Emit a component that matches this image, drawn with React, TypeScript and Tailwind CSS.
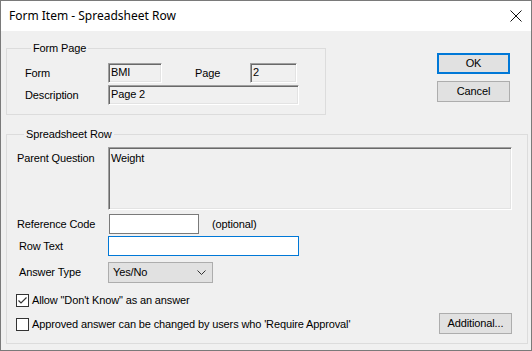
import React from 'react';

const sunken =
  'border border-t-[#a0a0a0] border-l-[#a0a0a0] border-b-white border-r-white shadow-[inset_1px_1px_0_#696969,inset_-1px_-1px_0_#e3e3e3]';

function Button({ children, focused }: { children: React.ReactNode; focused?: boolean }) {
  return (
    <button
      className={`w-[73px] h-[21px] bg-[#e1e1e1] text-[11px] text-black flex items-center justify-center ${
        focused ? 'border-2 border-[#0078d7]' : 'border border-[#adadad]'
      }`}
    >
      {children}
    </button>
  );
}

function Checkbox({ checked }: { checked?: boolean }) {
  return (
    <span className="w-[13px] h-[13px] border border-[#333333] bg-white flex items-center justify-center shrink-0">
      {checked && (
        <svg width="11" height="11" viewBox="0 0 11 11">
          <path d="M1.5 5.5 L4 8 L9.5 2.5" fill="none" stroke="#333333" strokeWidth="1.2" />
        </svg>
      )}
    </span>
  );
}

export default function App() {
  return (
    <div className="w-[532px] h-[351px] border border-[#7a7a7a] bg-[#f0f0f0] flex flex-col font-['Liberation_Sans',Arial,sans-serif] text-[11px] tracking-[-0.13px] text-black overflow-hidden">
      {/* Title bar */}
      <div className="h-[30px] bg-white flex items-center pl-[8px] pr-[9px] shrink-0">
        <span className="text-[12px] tracking-normal font-['Noto_Sans',sans-serif]">Form Item - Spreadsheet Row</span>
        <svg className="ml-auto" width="12" height="12" viewBox="0 0 12 12">
          <path d="M0.5 0.5 L11.5 11.5 M11.5 0.5 L0.5 11.5" stroke="#111" strokeWidth="1" />
        </svg>
      </div>

      <div className="flex-1 px-[5px] pt-[10px] flex flex-col">
        {/* Top row */}
        <div className="flex">
          <fieldset className="w-[320px] border border-[#dcdcdc] pl-[18px] pt-[8px] pb-[9px]">
            <legend className="ml-[6px] px-[2px] leading-[14px]">Form Page</legend>
            <div className="flex items-center h-[20px]">
              <span className="w-[83px]">Form</span>
              <div className={`w-[54px] h-[20px] ${sunken} px-[2px] leading-[16px]`}>BMI</div>
              <span className="ml-[33px] w-[55px]">Page</span>
              <div className={`w-[47px] h-[20px] ${sunken} px-[2px] leading-[16px]`}>2</div>
            </div>
            <div className="flex items-center h-[20px] mt-[2px]">
              <span className="w-[83px]">Description</span>
              <div className={`w-[191px] h-[20px] ${sunken} px-[2px] leading-[16px]`}>Page 2</div>
            </div>
          </fieldset>
          <div className="ml-auto mr-[16px] mt-[12px] flex flex-col gap-[7px]">
            <Button focused>OK</Button>
            <Button>Cancel</Button>
          </div>
        </div>

        {/* Spreadsheet Row */}
        <fieldset className="mt-[12px] border border-[#dcdcdc] pl-[10px] pr-[15px] pt-[6px] pb-[9px]">
          <legend className="ml-[7px] px-[2px] leading-[14px]">Spreadsheet Row</legend>
          <div className="flex">
            <span className="w-[91px] pt-[3px]">Parent Question</span>
            <div className={`w-[404px] h-[63px] ${sunken} px-[2px] pt-[2px]`}>Weight</div>
          </div>
          <div className="flex items-center h-[20px] mt-[4px]">
            <span className="w-[92px]">Reference Code</span>
            <div className="w-[90px] h-[20px] bg-white border border-[#7a7a7a]" />
            <span className="ml-[13px]">(optional)</span>
          </div>
          <div className="flex items-center h-[20px] mt-[2px] pl-[2px]">
            <span className="w-[89px]">Row Text</span>
            <div className="w-[191px] h-[20px] bg-white border border-[#0078d7]" />
          </div>
          <div className="flex items-center h-[21px] mt-[6px] pl-[2px]">
            <span className="w-[89px]">Answer Type</span>
            <div className="w-[105px] h-[21px] bg-[#e1e1e1] border border-[#adadad] flex items-center pl-[4px] pr-[6px]">
              <span>Yes/No</span>
              <svg className="ml-auto" width="9" height="5" viewBox="0 0 9 5">
                <path d="M0.5 0.5 L4.5 4.5 L8.5 0.5" fill="none" stroke="#333" strokeWidth="1" />
              </svg>
            </div>
          </div>
          <div className="flex items-center mt-[9px] -ml-[1px] gap-[3px]">
            <Checkbox checked />
            <span>Allow "Don't Know" as an answer</span>
          </div>
          <div className="flex items-end mt-[4px]">
            <div className="flex items-center -ml-[1px] gap-[3px] mb-[1px]">
              <Checkbox />
              <span>Approved answer can be changed by users who 'Require Approval'</span>
            </div>
            <div className="ml-auto">
              <Button>Additional...</Button>
            </div>
          </div>
        </fieldset>
      </div>
    </div>
  );
}
